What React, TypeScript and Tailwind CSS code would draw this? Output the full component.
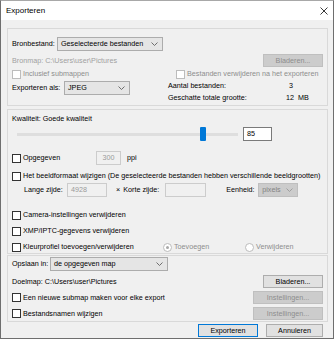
import React from "react";

const Chevron = ({ color = "#606060" }: { color?: string }) => (
    <svg width="7" height="4" viewBox="0 0 7 4" className="shrink-0">
        <polyline points="0.5,0.5 3.5,3.5 6.5,0.5" fill="none" stroke={color} strokeWidth="0.9" />
    </svg>
);

const Select = ({ value, width, disabled }: { value: string; width: string; disabled?: boolean }) => (
    <div
        className={`${width} shrink-0 h-[14px] flex items-center justify-between pl-[3px] pr-[4px] border ${
            disabled ? "bg-[#cccccc] border-[#bfbfbf] text-[#838383]" : "bg-[#e5e5e5] border-[#acacac] text-black"
        }`}
    >
        <span>{value}</span>
        <Chevron color={disabled ? "#9a9a9a" : "#606060"} />
    </div>
);

const Checkbox = ({ label, disabled }: { label: string; disabled?: boolean }) => (
    <div className="flex items-center">
        <div className={`w-[9px] h-[9px] shrink-0 bg-white border ${disabled ? "border-[#bcbcbc]" : "border-[#333333]"}`} />
        <span className={`ml-[2px] ${disabled ? "text-[#8d8d8d]" : "text-black"}`}>{label}</span>
    </div>
);

const Button = ({ label, width, disabled, primary }: { label: string; width: string; disabled?: boolean; primary?: boolean }) => (
    <div
        className={`${width} shrink-0 h-[13px] flex items-center justify-center border ${
            disabled
                ? "bg-[#cccccc] border-[#bfbfbf] text-[#8d8d8d]"
                : primary
                ? "bg-[#e1e1e1] border-[#0078d7] text-black"
                : "bg-[#e1e1e1] border-[#adadad] text-black"
        }`}
    >
        {label}
    </div>
);

const Field = ({ value, width, disabled, center }: { value: string; width: string; disabled?: boolean; center?: boolean }) => (
    <div
        className={`${width} shrink-0 h-[14px] flex items-center px-[3px] border ${center ? "justify-center" : ""} ${
            disabled ? "bg-[#f0f0f0] border-[#cccccc] text-[#9a9a9a]" : "bg-white border-[#7a7a7a] text-black"
        }`}
    >
        {value}
    </div>
);

const Radio = ({ label, checked }: { label: string; checked?: boolean }) => (
    <div className="flex items-center">
        <div className="w-[9px] h-[9px] rounded-full bg-white border border-[#bcbcbc] flex items-center justify-center">
            {checked && <div className="w-[3px] h-[3px] rounded-full bg-[#a8a8a8]" />}
        </div>
        <span className="ml-[2px] text-[#8d8d8d]">{label}</span>
    </div>
);

export default function App() {
    return (
        <div className="w-[334px] h-[341px] bg-white whitespace-nowrap font-['Liberation_Sans',Arial,sans-serif] text-[7.2px] leading-none text-black">
            <div className="w-[334px] h-[339px] border border-[#6e6e6e] border-t-[#a8a8a8] flex flex-col">
                {/* title bar */}
                <div className="h-[19px] shrink-0 bg-white flex items-center pl-[5px] pr-[5px]">
                    <span className="text-[8px]">Exporteren</span>
                    <svg width="8" height="8" viewBox="0 0 8 8" className="ml-auto">
                        <path d="M0.5 0.5 L7.5 7.5 M7.5 0.5 L0.5 7.5" stroke="#222" strokeWidth="0.9" />
                    </svg>
                </div>

                <div className="flex-1 bg-[#f0f0f0] pl-[6px] pr-[5px] pt-[8px]">
                    {/* source panel */}
                    <div className="border border-[#d9d9d9] pl-[4px] pr-[4px] pb-[1px]">
                        <div className="mt-[8px] h-[14px] flex items-center">
                            <span className="w-[45px]">Bronbestand:</span>
                            <Select value="Geselecteerde bestanden" width="w-[106px]" />
                        </div>
                        <div className="mt-[3px] h-[13px] flex items-center justify-between">
                            <span className="text-[#a0a0a0]">Bronmap: C:\Users\user\Pictures</span>
                            <Button label="Bladeren..." width="w-[60px]" disabled />
                        </div>
                        <div className="mt-[1px] h-[12px] flex items-center">
                            <div className="w-[164px]">
                                <Checkbox label="Inclusief submappen" disabled />
                            </div>
                            <Checkbox label="Bestanden verwijderen na het exporteren" disabled />
                        </div>
                        <div className="h-[24px] flex items-start">
                            <div className="w-[156px] h-[14px] mt-[1px] flex items-center">
                                <span className="w-[52px]">Exporteren als:</span>
                                <Select value="JPEG" width="w-[66px]" />
                            </div>
                            <div className="flex flex-col">
                                <div className="h-[12px] flex items-center">
                                    <span className="w-[121px]">Aantal bestanden:</span>
                                    <span>3</span>
                                </div>
                                <div className="h-[12px] flex items-center">
                                    <span className="w-[118px]">Geschatte totale grootte:</span>
                                    <span>12</span>
                                    <span className="ml-[4px]">MB</span>
                                </div>
                            </div>
                        </div>
                    </div>

                    {/* options panel */}
                    <div className="mt-[3px] border border-[#d9d9d9] pl-[4px] pr-[4px]">
                        <div className="mt-[3px] h-[12px] flex items-center">Kwaliteit: Goede kwaliteit</div>
                        <div className="mt-[2px] h-[14px] flex items-center">
                            <div className="ml-[5px] w-[183px] h-[3px] bg-[#dedede]" />
                            <div className="w-[6px] h-[14px] bg-[#0078d7] rounded-[1px]" />
                            <div className="w-[32px] h-[3px] bg-[#dedede]" />
                            <div className="ml-[5px]">
                                <Field value="85" width="w-[29px]" />
                            </div>
                        </div>
                        <div className="mt-[10px] h-[14px] flex items-center">
                            <div className="w-[84px]">
                                <Checkbox label="Opgegeven" />
                            </div>
                            <Field value="300" width="w-[25px]" disabled center />
                            <span className="ml-[6px]">ppi</span>
                        </div>
                        <div className="mt-[5px] h-[12px] flex items-center">
                            <Checkbox label="Het beeldformaat wijzigen (De geselecteerde bestanden hebben verschillende beeldgrootten)" />
                        </div>
                        <div className="mt-[1px] h-[14px] flex items-center pl-[12px]">
                            <span className="w-[43px]">Lange zijde:</span>
                            <Field value="4928" width="w-[40px]" disabled />
                            <span className="ml-[9px]">×</span>
                            <span className="ml-[3px] w-[42px]">Korte zijde:</span>
                            <Field value="" width="w-[41px]" disabled />
                            <span className="ml-[20px] w-[32px]">Eenheid:</span>
                            <Select value="pixels" width="w-[40px]" disabled />
                        </div>
                        <div className="mt-[12px] h-[12px] flex items-center">
                            <Checkbox label="Camera-instellingen verwijderen" />
                        </div>
                        <div className="mt-[4px] h-[12px] flex items-center">
                            <Checkbox label="XMP/IPTC-gegevens verwijderen" />
                        </div>
                        <div className="mt-[4px] h-[12px] flex items-center">
                            <div className="w-[151px]">
                                <Checkbox label="Kleurprofiel toevoegen/verwijderen" />
                            </div>
                            <div className="w-[82px]">
                                <Radio label="Toevoegen" checked />
                            </div>
                            <Radio label="Verwijderen" />
                        </div>
                    </div>

                    {/* destination panel */}
                    <div className="mt-[1px] border border-[#d9d9d9] pl-[4px] pr-[4px] pb-[1px]">
                        <div className="mt-[1px] h-[14px] flex items-center">
                            <span className="w-[38px]">Opslaan in:</span>
                            <Select value="de opgegeven map" width="w-[118px]" />
                        </div>
                        <div className="mt-[4px] h-[13px] flex items-center justify-between">
                            <span>Doelmap: C:\Users\user\Pictures</span>
                            <Button label="Bladeren..." width="w-[60px]" />
                        </div>
                        <div className="mt-[3px] h-[13px] flex items-center justify-between">
                            <Checkbox label="Een nieuwe submap maken voor elke export" />
                            <Button label="Instellingen..." width="w-[70px]" disabled />
                        </div>
                        <div className="mt-[3px] h-[13px] flex items-center justify-between">
                            <Checkbox label="Bestandsnamen wijzigen" />
                            <Button label="Instellingen..." width="w-[70px]" disabled />
                        </div>
                    </div>

                    {/* actions */}
                    <div className="mt-[2px] h-[13px] flex items-center justify-end gap-[8px] pr-[5px]">
                        <Button label="Exporteren" width="w-[60px]" primary />
                        <Button label="Annuleren" width="w-[57px]" />
                    </div>
                </div>
            </div>
        </div>
    );
}
